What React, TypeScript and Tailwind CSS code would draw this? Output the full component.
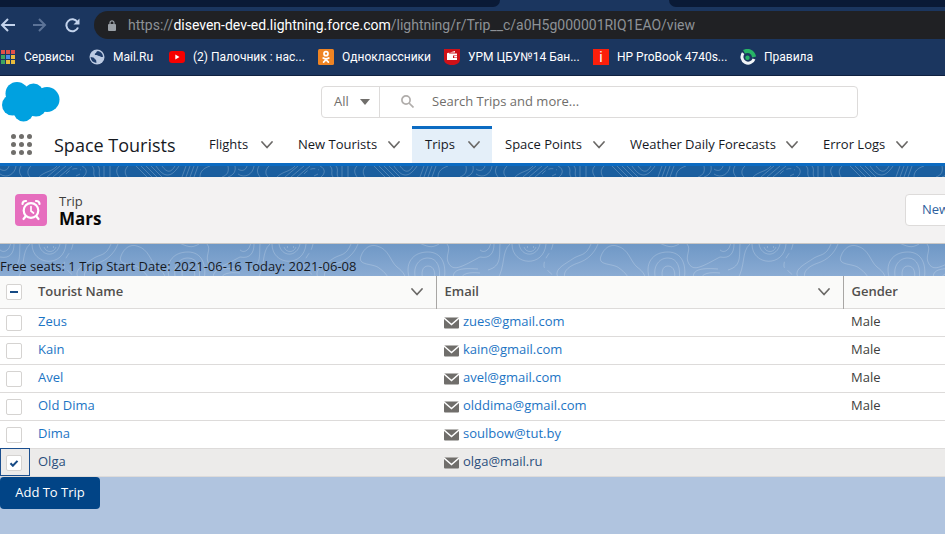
import { useEffect, useRef, useState } from "react";
import type { ReactNode } from "react";

const salesforce = "font-['Open_Sans','Noto_Sans',sans-serif]";
const chrome = "font-['Roboto','Noto_Sans',sans-serif]";

function Chevron() {
  return (
    <svg viewBox="0 0 14 8" className="h-2 w-[14px] shrink-0" fill="none" stroke="#6b6967" strokeWidth="1.7" strokeLinecap="round" strokeLinejoin="round">
      <path d="M2 1l5 5.500L12 1" />
    </svg>
  );
}

function BrowserTabs() {
  return (
    <div className="flex h-[7px] bg-[#1b365f]">
      <div className="w-[500px] rounded-br-lg bg-[#0a1a36]" />
      <div className="w-[169px]" />
      <div className="flex-1 rounded-bl-lg bg-[#0a1a36]" />
    </div>
  );
}

function AddressBar() {
  return (
    <div className="flex h-9 items-center">
      <div className="flex w-[94px] shrink-0 items-center gap-[18px]">
        <button aria-label="Back" className="h-[14px] w-[15px]">
          <svg viewBox="0 0 15 14" fill="none" stroke="#c3d3ec" strokeWidth="2">
            <path d="M15 7H2M8 1L2 7l6 6" />
          </svg>
        </button>
        <button aria-label="Forward" className="h-[14px] w-[14px]">
          <svg viewBox="0 0 14 14" fill="none" stroke="#5c7397" strokeWidth="2">
            <path d="M0 7h12M6 1l6 6-6 6" />
          </svg>
        </button>
        <button aria-label="Reload" className="h-[15px] w-[15px]">
          <svg viewBox="0 0 15 15" fill="none" stroke="#c3d3ec" strokeWidth="2">
            <path d="M12.400 4A6 6 0 1 0 13 9.500" />
            <path d="M14.500 0.500v6h-6z" fill="#c3d3ec" stroke="none" />
          </svg>
        </button>
      </div>
      <div className="flex h-7 flex-1 items-center rounded-l-full bg-[#202124] pl-[14px]">
        <svg viewBox="0 0 8 11" className="h-[11px] w-2" fill="#9aa0a6">
          <rect y="4" width="8" height="7" rx="1" />
          <path d="M2 4.500V2.800a2 2 0 0 1 4 0V4.500" fill="none" stroke="#9aa0a6" strokeWidth="1.200" />
        </svg>
        <span className="pl-3 text-sm whitespace-nowrap text-[#8d9196]">
          https://<span className="text-white">diseven-dev-ed.lightning.force.com</span>/lightning/r/Trip__c/a0H5g000001RIQ1EAO/view
        </span>
      </div>
    </div>
  );
}

function AppsIcon() {
  const colors = ["#e0504a", "#e0504a", "#e0504a", "#3fa45f", "#4a8bea", "#e8bb3c", "#3fa45f", "#e8bb3c", "#e8bb3c"];
  return (
    <svg viewBox="0 0 14 14" className="h-[14px] w-4">
      {colors.map((c, i) => (
        <rect key={i} x={(i % 3) * 5} y={Math.floor(i / 3) * 5} width="4" height="4" fill={c} />
      ))}
    </svg>
  );
}

function GlobeIcon() {
  return (
    <svg viewBox="0 0 16 16" className="h-4 w-4">
      <circle cx="8" cy="8" r="7.500" fill="#bccbe3" />
      <path d="M1.500 8c2 .2 3.500.3 4 1.600.4 1.200 1.600.8 1.700 2 .1 1 .2 1.700.2 2.300C4 13.600 1.800 11.500 1.500 8zM9 1.900c-2.200.3-1 1.600-2.500 2.300-1.500.8-.4 2 .7 1.800 1.400-.2 1.600 1 2.900.9 1.400 0 1.500 1.300 2.800 1.200l1.200-.3C13.800 4.800 12 2.500 9 1.900z" fill="#1f3d6b" />
    </svg>
  );
}

function YoutubeIcon() {
  return (
    <svg viewBox="0 0 16 12" className="h-3 w-4">
      <rect width="16" height="12" rx="3" fill="#f50000" />
      <path d="M6.300 3.500v5L10.500 6z" fill="#fff" />
    </svg>
  );
}

function OkIcon() {
  return (
    <svg viewBox="0 0 16 16" className="h-4 w-4">
      <rect width="16" height="16" rx="1.500" fill="#ef8423" />
      <g fill="none" stroke="#fff" strokeWidth="1.700" strokeLinecap="round">
        <circle cx="8" cy="4.700" r="2" />
        <path d="M5.200 9c1.700 1.200 3.900 1.200 5.600 0M5.600 13.200L8 10.700l2.400 2.500" />
      </g>
    </svg>
  );
}

function WalletIcon() {
  return (
    <svg viewBox="0 0 16 16" className="h-4 w-4">
      <path d="M0 0h16v10c0 3.500-2.500 6-8 6s-8-2.500-8-6z" fill="#cf1118" />
      <path d="M3 4.300L11 2v1.600H5.500L5 4.600h8V11H3z" fill="#fff" />
      <rect x="9" y="6.500" width="4" height="2.500" fill="#cf1118" />
      <rect x="10.200" y="7" width="2.800" height="1.500" fill="#fff" />
    </svg>
  );
}

function InfoIcon() {
  return <span className="flex h-4 w-4 items-center justify-center bg-[#fb1f0b] text-sm leading-4 text-white">i</span>;
}

function RulesIcon() {
  return (
    <svg viewBox="0 0 16 16" className="h-4 w-4" fill="none">
      <path d="M3.200 4.200A6.200 6.200 0 1 0 14 10" stroke="#f1f5f8" strokeWidth="3" />
      <path d="M4 2.800c4-2.200 9-.3 10.200 5.200" stroke="#27b566" strokeWidth="4" />
      <circle cx="7.500" cy="8.800" r="2.200" fill="#27b566" />
    </svg>
  );
}

const bookmarks: { label: string; icon: ReactNode; width: string }[] = [
  { label: "Сервисы", icon: <AppsIcon />, width: "w-[89px]" },
  { label: "Mail.Ru", icon: <GlobeIcon />, width: "w-[80px]" },
  { label: "(2) Палочник : нас...", icon: <YoutubeIcon />, width: "w-[149px]" },
  { label: "Одноклассники", icon: <OkIcon />, width: "w-[126px]" },
  { label: "УРМ ЦБУ№14 Бан...", icon: <WalletIcon />, width: "w-[149px]" },
  { label: "HP ProBook 4740s...", icon: <InfoIcon />, width: "w-[147px]" },
  { label: "Правила", icon: <RulesIcon />, width: "w-[90px]" },
];

function Bookmarks() {
  return (
    <nav aria-label="Bookmarks" className="flex h-8 items-start">
      {bookmarks.map((b) => (
        <a key={b.label} href="#" className={`flex h-7 shrink-0 items-center gap-2 text-xs whitespace-nowrap text-white ${b.width}`}>
          {b.icon}
          {b.label}
        </a>
      ))}
    </nav>
  );
}

function Topography({ id }: { id: string }) {
  return (
    <svg aria-hidden="true" className="pointer-events-none absolute inset-0 h-full w-full" fill="none" stroke="#fff" strokeOpacity=".2">
      <defs>
        <pattern id={id} width="240" height="36" patternUnits="userSpaceOnUse">
          <path d="M-2 0c0 8 7 10 11 4l2-5M14 0c0 9-4 15-14 13M20 0c-1 12 2 22-12 26M30 0c-9 8-4 22-13 36" />
          <path d="M32 0c0 22 32 24 34 0M39 0c2 13 18 14 21 0M44 3c2 6 10 6 12 0" />
          <path d="M47 3h1M53 3h1" strokeWidth="2" />
          <path d="M73 0c-2 10-8 12-9 20s7 4 10 16" strokeDasharray="6 4" />
          <path d="M80 36c-9-10 4-15 14-22 7-4 12-2 17-14M86 36c-5-8 3-14 12-17 9-3 16-9 20-19" />
          <path d="M121 12c3-8 9-12 16-10 12 3 13 15 20 21 7 5 8 9 9 13M121 12c-4 10 12 7 18 12 7 5 8 8 11 12" />
          <path d="M170 36c-6-16 2-28 18-28 14 0 19 13 16 28M176 36c-4-12 2-22 12-22s13 11 11 22M183 36c-2-7-1-14 5-14s8 7 6 14" />
          <path d="M207 0c5 6-3 12 2 20s14 2 31-7M199 0c-8 5-12 2-20-1M214 36c-4-12 11-12 24-11M221 36c0-7 9-8 19-7" />
        </pattern>
      </defs>
      <rect width="100%" height="100%" fill={`url(#${id})`} stroke="none" />
    </svg>
  );
}

function TopographyBand({ id }: { id: string }) {
  return (
    <svg aria-hidden="true" className="pointer-events-none absolute inset-0 h-full w-full" fill="none" stroke="#fff" strokeOpacity=".22">
      <defs>
        <pattern id={id} width="238" height="11" patternUnits="userSpaceOnUse">
          <path d="M0 8c7 5 15 0 16-8M0 3c4 3 8 1 9-3M21 0c-3 5-1 8 1 11M31 0c-4 4-4 8-1 11" />
          <path d="M39 11C45 5 52 6 57 0M47 11L60 0M53 11L66 0M59 11L72 0" />
          <path d="M66 8c4-5 10-7 15-4M76 10l4-2" strokeDasharray="5 3" />
          <path d="M82 0c6 3 5 8 1 11M92 0c4 4 0 7 3 11M98 0c3 4 0 7 2 11M104 0v11M110 0v11" />
          <path d="M119 0c-4 4-2 8 0 11M128 0c-4 4-3 8-1 11" />
          <path d="M136 0l11 11M141 0l11 11M146 0l11 11M151 0l11 11M156 0c8 12 15 12 23 0M162 0c5 7 9 7 13 0" />
          <path d="M182 11L186 0M186 11L190 0M190 11L194 0M194 11L198 0M200 11c0-6 4-9 10-11" />
          <path d="M228 11c6-2 8-6 7-11M222 11c6-2 7-6 6-11" />
        </pattern>
      </defs>
      <rect width="100%" height="100%" fill={`url(#${id})`} stroke="none" />
    </svg>
  );
}

function CloudLogo() {
  return (
    <svg viewBox="0 0 58 42" className="h-[42px] w-[58px]" fill="#00a1e0" role="img" aria-label="Salesforce">
      <circle cx="15" cy="12.500" r="11.500" />
      <circle cx="31.500" cy="12.500" r="10" />
      <circle cx="45" cy="18.500" r="12.500" />
      <circle cx="10.500" cy="24" r="10.500" />
      <circle cx="21.500" cy="30.500" r="10" />
      <circle cx="34" cy="25" r="10.500" />
      <rect x="12" y="9" width="30" height="20" />
    </svg>
  );
}

function GlobalHeader() {
  return (
    <div className="flex h-[49px] items-center gap-[261px] pl-0.5">
      <CloudLogo />
      <form className="flex h-8 w-[537px] items-center rounded border border-[#dddbda] bg-white text-[13px] text-[#706e6b]">
        <button type="button" className="flex h-full w-[58px] shrink-0 items-center gap-[11px] border-r border-[#dddbda] pl-3">
          All
          <svg viewBox="0 0 10 6" className="h-[6px] w-[10px]" fill="#706e6b">
            <path d="M0 0h10L5 6z" />
          </svg>
        </button>
        <svg viewBox="0 0 13 13" className="ml-[21px] h-[13px] w-[13px] shrink-0" fill="none" stroke="#b0adab" strokeWidth="1.700">
          <circle cx="5" cy="5" r="4.100" />
          <path d="M8 8l4.500 4.500" />
        </svg>
        <input aria-label="Search" placeholder="Search Trips and more..." className="ml-[18px] min-w-0 flex-1 bg-transparent outline-none placeholder:text-[#706e6b]" />
      </form>
    </div>
  );
}

const tabs = [
  { label: "Flights", width: "w-[89px]" },
  { label: "New Tourists", width: "w-[127px]" },
  { label: "Trips", width: "w-[80px]", active: true },
  { label: "Space Points", width: "w-[125px]" },
  { label: "Weather Daily Forecasts", width: "w-[193px]" },
  { label: "Error Logs", width: "w-[110px]" },
];

function AppNav() {
  return (
    <nav aria-label="Space Tourists" className="flex h-[40px] border-b-[3px] border-[#0b6bc2] text-[13px] text-[#16191f]">
      <button aria-label="App Launcher" className="w-[54px] shrink-0 pl-[11px]">
        <svg viewBox="0 0 21 21" className="h-[21px] w-[21px]" fill="#706e6b">
          {[0, 1, 2, 3, 4, 5, 6, 7, 8].map((i) => (
            <circle key={i} cx={2.5 + (i % 3) * 8} cy={2.5 + Math.floor(i / 3) * 8} r="2.500" />
          ))}
        </svg>
      </button>
      <span className="flex w-[142px] shrink-0 items-center text-lg whitespace-nowrap">Space Tourists</span>
      {tabs.map((t) => (
        <div
          key={t.label}
          className={`flex shrink-0 items-center justify-between border-t-[3px] pr-[11px] pb-0.5 pl-[13px] ${t.width} ${t.active ? "border-[#0b6bc2] bg-[#e4eff9]" : "border-transparent"}`}
        >
          <a href="#" className="whitespace-nowrap">{t.label}</a>
          <button aria-label={`${t.label} menu`}>
            <Chevron />
          </button>
        </div>
      ))}
    </nav>
  );
}

function RecordHeader() {
  return (
    <header className="relative flex h-[67px] items-center justify-between overflow-hidden border-b border-[#c9c7c5] bg-[#f3f2f2] pl-[15px] shadow">
      <div className="flex items-center gap-3">
        <svg viewBox="0 0 32 32" className="h-8 w-8">
          <rect width="32" height="32" rx="4" fill="#e66ebe" />
          <g fill="none" stroke="#fff" strokeLinecap="round">
            <circle cx="16" cy="16.500" r="7.300" strokeWidth="2.200" />
            <path d="M16 12.500v4.500l2.500 2" strokeWidth="1.700" />
            <path d="M7.500 10c0-2 1.500-3.200 3.500-3M24.500 10c0-2-1.500-3.200-3.500-3M10.500 22.500L8.500 25M21.500 22.500l2 2.500" strokeWidth="2.200" />
          </g>
        </svg>
        <div className="text-[#3e3e3c]">
          <p className="text-[13px] leading-[18px]">Trip</p>
          <h1 className="text-[17px] leading-[18px] font-bold text-[#080707]">Mars</h1>
        </div>
      </div>
      <button className="-mr-5 h-8 w-[60px] shrink-0 rounded border border-[#dddbda] bg-white pl-4 text-left text-[13px] whitespace-nowrap text-[#2f5f9e]">New</button>
    </header>
  );
}

function Tick({ label, checked, mixed, onChange }: { label: string; checked: boolean; mixed?: boolean; onChange: () => void }) {
  const ref = useRef<HTMLInputElement>(null);
  useEffect(() => {
    if (ref.current) ref.current.indeterminate = Boolean(mixed);
  }, [mixed]);
  return (
    <label className="relative block h-4 w-4">
      <input ref={ref} type="checkbox" aria-label={label} checked={checked} onChange={onChange} className="block h-4 w-4 appearance-none rounded-xs border border-[#d5d3d1] bg-white" />
      {mixed && <span className="pointer-events-none absolute top-[7px] left-1 h-0.5 w-2 bg-[#164a85]" />}
      {checked && (
        <svg viewBox="0 0 10 8" className="pointer-events-none absolute top-[5px] left-[3px] h-[7px] w-[10px]" fill="none" stroke="#164a85" strokeWidth="2.400">
          <path d="M1 3.800l2.700 2.700L9 1" />
        </svg>
      )}
    </label>
  );
}

const tourists = [
  { name: "Zeus", email: "zues@gmail.com", gender: "Male" },
  { name: "Kain", email: "kain@gmail.com", gender: "Male" },
  { name: "Avel", email: "avel@gmail.com", gender: "Male" },
  { name: "Old Dima", email: "olddima@gmail.com", gender: "Male" },
  { name: "Dima", email: "soulbow@tut.by", gender: "" },
  { name: "Olga", email: "olga@mail.ru", gender: "" },
];

function TouristTable() {
  const [selected, setSelected] = useState<string[]>(["Olga"]);
  const toggle = (name: string) => setSelected((s) => (s.includes(name) ? s.filter((n) => n !== name) : [...s, name]));
  const all = selected.length === tourists.length;
  return (
    <table className="w-full table-fixed border-collapse bg-white text-left text-[13px] text-[#3e3e3c]">
      <colgroup>
        <col className="w-[30px]" />
        <col className="w-[406px]" />
        <col className="w-[407px]" />
        <col />
      </colgroup>
      <thead>
        <tr className="h-8 border-b border-[#dddbda] bg-[#fafaf9]">
          <th className="pl-[6px]">
            <Tick label="Select all" checked={all} mixed={selected.length > 0 && !all} onChange={() => setSelected(all ? [] : tourists.map((t) => t.name))} />
          </th>
          {["Tourist Name", "Email"].map((h) => (
            <th key={h} className="border-r border-[#a8a6a4] pr-3 pl-2 font-semibold text-[#514f4d]">
              <div className="flex items-center justify-between">
                {h}
                <button aria-label={`${h} actions`}>
                  <Chevron />
                </button>
              </div>
            </th>
          ))}
          <th className="pl-2 font-semibold text-[#514f4d]">Gender</th>
        </tr>
      </thead>
      <tbody>
        {tourists.map((t) => {
          const on = selected.includes(t.name);
          return (
            <tr key={t.name} className={`h-7 border-b border-[#dddbda] ${on ? "bg-[#ecebea]" : ""}`}>
              <td className={`pt-0.5 pl-[6px] ${on ? "outline-1 -outline-offset-1 outline-[#1b4f8f]" : ""}`}>
                <Tick label={`Select ${t.name}`} checked={on} onChange={() => toggle(t.name)} />
              </td>
              <td className="pl-2">
                <a href="#" className={on ? "text-[#2a4e7c]" : "text-[#1c74c4]"}>{t.name}</a>
              </td>
              <td className="pl-2">
                <a href="#" className={`flex items-center gap-1 ${on ? "text-[#2a4e7c]" : "text-[#1c74c4]"}`}>
                  <svg viewBox="0 0 15 12" className="mt-0.5 h-3 w-[15px]">
                    <rect y=".5" width="15" height="11" rx="1" fill="#706e6b" />
                    <path d="M0 1l7.500 6.500L15 1" fill="none" stroke="#fff" strokeWidth="1.500" />
                  </svg>
                  {t.email}
                </a>
              </td>
              <td className="pl-2">{t.gender}</td>
            </tr>
          );
        })}
      </tbody>
    </table>
  );
}

export default function App() {
  return (
    <div className={`min-h-screen overflow-hidden bg-[#b0c4df] ${salesforce}`}>
      <div className={`border-b border-[#0f2140] bg-[#1b365f] ${chrome}`}>
        <BrowserTabs />
        <AddressBar />
        <Bookmarks />
      </div>
      <div className="bg-white pt-px">
        <GlobalHeader />
        <AppNav />
      </div>
      <main>
        <div className="relative h-[11px] bg-[#1b5f9f]">
          <TopographyBand id="topo-band" />
        </div>
        <RecordHeader />
        <div className="relative flex h-8 items-end bg-linear-to-b from-[#6f98c6] to-[#8aabd3]">
          <Topography id="topo-body" />
          <p className="relative text-[13px] leading-5 whitespace-nowrap text-[#16191f]">Free seats: 1 Trip Start Date: 2021-06-16 Today: 2021-06-08</p>
        </div>
        <TouristTable />
        <button className="block h-8 w-[100px] rounded bg-[#014486] text-[13px] whitespace-nowrap text-white">Add To Trip</button>
      </main>
    </div>
  );
}
